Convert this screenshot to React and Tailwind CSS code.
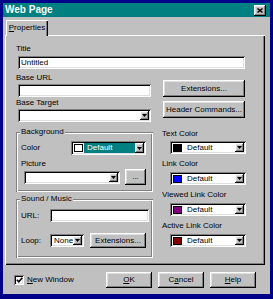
import React from 'react';

// win95-ish bevels
const sunken =
  'bg-white shadow-[inset_1px_1px_0_#808080,inset_-1px_-1px_0_#fff,inset_2px_2px_0_#000,inset_-2px_-2px_0_#dfdfdf]';
const raised =
  'bg-[#c0c0c0] shadow-[inset_-1px_-1px_0_#000,inset_1px_1px_0_#fff,inset_-2px_-2px_0_#808080,inset_2px_2px_0_#dfdfdf]';
const etched =
  'shadow-[inset_1px_1px_0_#808080,inset_-1px_-1px_0_#fff,inset_2px_2px_0_#fff,inset_-2px_-2px_0_#808080]';

const Arrow = () => (
  <svg width="5" height="3" viewBox="0 0 5 3">
    <path d="M0 0h5L2.5 3z" fill="#000" />
  </svg>
);

const Button = ({ className = '', children }) => (
  <div className={`flex items-center justify-center ${raised} ${className}`}>{children}</div>
);

const Input = ({ className = '', children }) => (
  <div className={`flex items-center pl-[3px] ${sunken} ${className}`}>{children}</div>
);

const Select = ({ className = '', children }) => (
  <div className={`flex p-[2px] ${sunken} ${className}`}>
    <div className="flex flex-1 items-center overflow-hidden">{children}</div>
    <div className={`flex w-[9px] items-center justify-center ${raised}`}>
      <Arrow />
    </div>
  </div>
);

const ColorSelect = ({ swatch, className = '' }) => (
  <Select className={className}>
    <div className={`ml-[1px] h-[8px] w-[9px] border border-black ${swatch}`} />
    <span className="ml-[5px] leading-none">Default</span>
  </Select>
);

const Label = ({ className = '', children }) => (
  <div className={`h-[10px] leading-[10px] ${className}`}>{children}</div>
);

const Group = ({ title, className = '', children }) => (
  <div className={`relative ${etched} ${className}`}>
    <span className="absolute -top-[5px] left-[4px] bg-[#c0c0c0] px-[1px] leading-[10px]">{title}</span>
    {children}
  </div>
);

export default function App() {
  return (
    <div className="h-[299px] w-[273px] bg-[#000088] pl-[3px] pt-[3px] font-['Liberation_Sans',Arial,sans-serif] text-[8px] text-black">
      <div className="flex h-[291px] w-[267px] flex-col bg-[#c0c0c0]">
        {/* title bar */}
        <div className="flex h-[14px] items-center justify-between bg-[#008080] pl-[2px] pr-[4px]">
          <span className="text-[10px] font-bold leading-none text-white">Web Page</span>
          <Button className="h-[11px] w-[12px]">
            <svg width="6" height="5" viewBox="0 0 6 5">
              <path d="M0.5 0.5l5 4M5.5 0.5l-5 4" stroke="#000" strokeWidth="1.4" />
            </svg>
          </Button>
        </div>

        <div className="pl-[2px] pt-[3px]">
          {/* tab */}
          <div className="relative z-10 -mb-[1px] ml-[1px] flex h-[16px] w-[42px] items-start justify-center bg-[#c0c0c0] pt-[3px] shadow-[inset_1px_1px_0_#fff,inset_-1px_0_0_#000,inset_-2px_0_0_#808080]">
            <span className="leading-[10px]">
              <span className="underline">P</span>roperties
            </span>
          </div>

          {/* panel */}
          <div className="h-[230px] w-[260px] pl-[11px] pt-[9px] shadow-[inset_1px_1px_0_#fff,inset_-1px_-1px_0_#000,inset_-2px_-2px_0_#808080]">
            <Label>Title</Label>
            <Input className="ml-[2px] mt-[2px] h-[13px] w-[227px]">Untitled</Input>

            <div className="flex">
              {/* left column */}
              <div className="flex w-[137px] flex-col">
                <Label className="mt-[4px]">Base URL</Label>
                <Input className="ml-[2px] mt-[1px] h-[13px] w-[133px]" />
                <Label className="mt-[1px]">Base Target</Label>
                <Select className="ml-[2px] mt-[1px] h-[13px] w-[133px]" />

                <Group title="Background" className="mt-[10px] h-[60px]">
                  <div className="mt-[9px] flex h-[14px] items-center pl-[5px]">
                    <span className="w-[50px]">Color</span>
                    <div className={`flex h-[14px] w-[75px] p-[2px] ${sunken}`}>
                      <div className="flex items-center bg-white px-[1px]">
                        <div className="h-[8px] w-[9px] border border-black bg-white" />
                      </div>
                      <div className="flex flex-1 items-center bg-[#008080] pl-[3px] text-white">Default</div>
                      <div className={`flex w-[9px] items-center justify-center ${raised}`}>
                        <Arrow />
                      </div>
                    </div>
                  </div>
                  <Label className="mt-[4px] pl-[5px]">Picture</Label>
                  <div className="flex h-[16px] items-center pl-[8px]">
                    <Select className="h-[13px] w-[96px]" />
                    <Button className="ml-[5px] h-[16px] w-[21px] leading-none">...</Button>
                  </div>
                </Group>

                <Group title="Sound / Music" className="mt-[7px] h-[59px]">
                  <div className="mt-[10px] flex h-[13px] items-center pl-[5px]">
                    <span className="w-[29px]">URL:</span>
                    <Input className="h-[13px] w-[99px]" />
                  </div>
                  <div className="mt-[11px] flex h-[15px] items-center pl-[5px]">
                    <span className="w-[29px]">Loop:</span>
                    <Select className="h-[13px] w-[34px]">
                      <span className="ml-[2px] leading-none">None</span>
                    </Select>
                    <Button className="ml-[6px] h-[15px] w-[56px]">Extensions...</Button>
                  </div>
                </Group>
              </div>

              {/* right column */}
              <div className="ml-[9px] flex flex-col">
                <Button className="ml-[1px] mt-[11px] h-[17px] w-[82px]">Extensions...</Button>
                <Button className="ml-[1px] mt-[4px] h-[17px] w-[82px]">Header Commands...</Button>
                <Label className="mt-[11px]">Text Color</Label>
                <ColorSelect swatch="bg-black" className="ml-[8px] mt-[2px] h-[13px] w-[76px]" />
                <Label className="mt-[5px]">Link Color</Label>
                <ColorSelect swatch="bg-[#0000ff]" className="ml-[8px] mt-[3px] h-[13px] w-[76px]" />
                <Label className="mt-[5px]">Viewed Link Color</Label>
                <ColorSelect swatch="bg-[#800080]" className="ml-[8px] mt-[3px] h-[13px] w-[76px]" />
                <Label className="mt-[5px]">Active Link Color</Label>
                <ColorSelect swatch="bg-[#800000]" className="ml-[8px] mt-[3px] h-[13px] w-[76px]" />
              </div>
            </div>
          </div>
        </div>

        {/* bottom row */}
        <div className="flex flex-1 items-center pl-[11px] pr-[14px]">
          <div className={`flex h-[10px] w-[10px] items-center justify-center ${sunken}`}>
            <svg width="7" height="6" viewBox="0 0 7 6">
              <path d="M0.8 2.8l2 2 3.5-4" stroke="#000" strokeWidth="1.6" fill="none" />
            </svg>
          </div>
          <span className="ml-[3px]">
            <span className="underline">N</span>ew Window
          </span>
          <div className="ml-auto flex gap-[6px]">
            <Button className="h-[16px] w-[46px]">
              <span className="underline">O</span>K
            </Button>
            <Button className="h-[16px] w-[46px]">
              C<span className="underline">a</span>ncel
            </Button>
            <Button className="h-[16px] w-[46px]">
              <span className="underline">H</span>elp
            </Button>
          </div>
        </div>
      </div>
    </div>
  );
}
